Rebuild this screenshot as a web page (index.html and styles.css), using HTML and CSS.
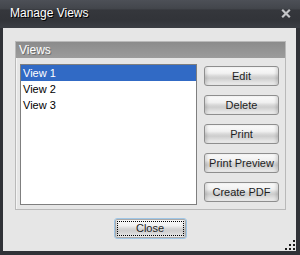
FILE: index.html
```html
<!DOCTYPE html>
<html>
<head>
<meta charset="utf-8">
<link rel="stylesheet" href="styles.css">
</head>
<body>
<div class="window">
  <div class="titlebar">
    <span class="title">Manage Views</span>
    <svg class="close-x" width="10" height="9" viewBox="0 0 10 9">
      <path d="M1.2 0.8 L8.8 8.2 M8.8 0.8 L1.2 8.2" stroke="#c4c5c8" stroke-width="2.2" fill="none"/>
    </svg>
  </div>
  <div class="content">
    <div class="group">
      <div class="group-header">Views</div>
      <div class="group-body">
        <ul class="list">
          <li class="item selected">View 1</li>
          <li class="item">View 2</li>
          <li class="item">View 3</li>
        </ul>
        <div class="actions">
          <button class="btn">Edit</button>
          <button class="btn">Delete</button>
          <button class="btn">Print</button>
          <button class="btn">Print Preview</button>
          <button class="btn">Create PDF</button>
        </div>
      </div>
    </div>
    <div class="footer">
      <button class="btn close-btn"><span class="focus">Close</span></button>
    </div>
    <div class="grip">
      <i class="d d1"></i>
      <i class="d d2"></i><i class="d d3"></i>
      <i class="d d4"></i><i class="d d5"></i><i class="d d6"></i>
    </div>
  </div>
</div>
</body>
</html>
```
FILE: styles.css
```css
* { box-sizing: border-box; }
html, body { margin: 0; padding: 0; }
body {
  width: 300px;
  height: 255px;
  font-family: "Liberation Sans", Arial, sans-serif;
  overflow: hidden;
}
.window {
  width: 300px;
  height: 255px;
  background: #303237;
  display: flex;
  flex-direction: column;
}
.titlebar {
  height: 28px;
  flex: none;
  display: flex;
  align-items: center;
  justify-content: space-between;
  padding: 0 9px 2px 10px;
  background: linear-gradient(#4d5057 0%, #43464c 30%, #35373c 36%, #323439 70%, #3b3e44 100%);
}
.title {
  color: #ffffff;
  font-size: 12px;
  text-shadow: 1px 1px 0 #000;
}
.close-x { display: block; }
.content {
  position: relative;
  flex: 1;
  margin: 0 4px 4px 3px;
  background: #e6e6e6;
  padding: 13px 10px 0 12px;
  display: flex;
  flex-direction: column;
}
.group {
  width: 271px;
  height: 169px;
  border: 1px solid #b9b9b9;
  box-shadow: inset 1px 1px 0 #f4f4f4;
  display: flex;
  flex-direction: column;
}
.group-header {
  height: 16px;
  background: linear-gradient(#8b8b8b, #9c9c9c);
  color: #fff;
  font-size: 12px;
  line-height: 16px;
  padding-left: 3px;
  text-shadow: 1px 1px 0 #6e6e6e;
}
.group-body {
  flex: 1;
  display: flex;
  padding: 6px 6px 4px 4px;
  gap: 7px;
}
.list {
  margin: 0;
  padding: 0;
  list-style: none;
  width: 177px;
  height: 141px;
  background: #fff;
  border: 1px solid #7f7f7f;
}
.item {
  height: 16px;
  line-height: 16px;
  font-size: 11px;
  padding-left: 2px;
  color: #000;
}
.item.selected {
  background: #316ac5;
  color: #fff;
}
.actions {
  display: flex;
  flex-direction: column;
  gap: 9px;
  padding-top: 2px;
}
.btn {
  width: 75px;
  height: 20px;
  padding: 0;
  border: 1px solid #8e8e8e;
  border-radius: 3px;
  font-family: "Liberation Sans", Arial, sans-serif;
  font-size: 11px;
  color: #1e1e1e;
  background: linear-gradient(#fbfbfb 0%, #f1f1f1 35%, #d8d8d8 50%, #cdcdcd 62%, #e2e2e2 85%, #f0f0f0 100%);
  box-shadow: inset 3px 0 3px -1px rgba(0,0,0,0.12), inset -3px 0 3px -1px rgba(0,0,0,0.12);
}
.footer {
  display: flex;
  justify-content: center;
  padding-top: 8px;
  padding-right: 1px;
}
.close-btn {
  width: 73px;
  height: 21px;
  border: 1px solid #9fc6e6;
  box-shadow: inset 0 0 0 1px #a9a9a9, inset 3px 0 3px -1px rgba(0,0,0,0.12), inset -3px 0 3px -1px rgba(0,0,0,0.12);
  padding: 2px;
  display: flex;
}
.focus {
  flex: 1;
  border: 1px dotted #000;
  line-height: 13px;
  text-align: center;
}
.grip {
  position: absolute;
  right: 1px;
  bottom: 1px;
  width: 10px;
  height: 10px;
}
.d {
  position: absolute;
  width: 2px;
  height: 2px;
  background: #1a1a1a;
}
.d1 { left: 8px; top: 0; }
.d2 { left: 4px; top: 4px; }
.d3 { left: 8px; top: 4px; }
.d4 { left: 0; top: 8px; }
.d5 { left: 4px; top: 8px; }
.d6 { left: 8px; top: 8px; }
```
